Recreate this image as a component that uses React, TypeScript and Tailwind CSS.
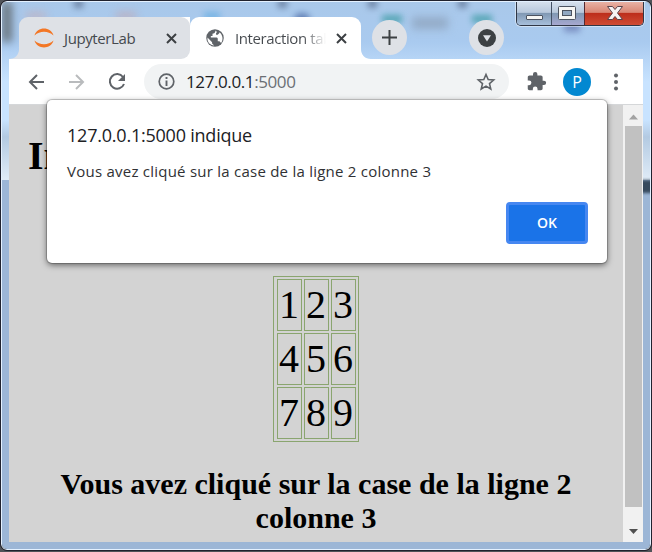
import React from "react";

const ui = "font-['Open_Sans','Noto_Sans',sans-serif]";

function CloseMark() {
  return (
    <svg width="11" height="11" viewBox="0 0 11 11" className="block shrink-0">
      <path d="M1 1 10 10M10 1 1 10" stroke="#3c4043" strokeWidth="2" fill="none" />
    </svg>
  );
}

function TabFoot({ flip, color }: { flip?: boolean; color: string }) {
  return (
    <svg width="10" height="10" viewBox="0 0 10 10" className={flip ? "block -scale-x-100" : "block"}>
      <path d="M10 0V10H0C6 10 10 6 10 0Z" fill={color} />
    </svg>
  );
}

function Tabs() {
  return (
    <div className="flex h-[42px]">
      <div className="flex w-[10px] shrink-0 items-end"><TabFoot color="#dee1e6" /></div>
      <div className="h-[42px] w-[171px] shrink-0 bg-[linear-gradient(90deg,transparent_50%,white_50%)]">
        <div className="flex h-[42px] items-center rounded-t-[9px] rounded-br-[9px] bg-[#dee1e6] pl-[14px] pr-[13px]">
          <svg width="22" height="22" viewBox="0 0 22 22" className="shrink-0">
            <path d="M1.500 8.500C4-.8 18-.8 20.500 8.500 15 3.500 7 3.500 1.500 8.500ZM1.500 13.500C7 18.500 15 18.500 20.500 13.500 18 22.800 4 22.800 1.500 13.500Z" fill="#f37726" />
          </svg>
          <span className="ml-[9px] flex-1 whitespace-nowrap text-[15px] leading-5 tracking-[-0.4px] text-[#45494e]">JupyterLab</span>
          <CloseMark />
        </div>
      </div>
      <div className="flex h-[42px] w-[171px] shrink-0 items-center rounded-t-[9px] bg-white pl-[15px] pr-[14px]">
        <svg width="20" height="20" viewBox="0 0 24 24" className="shrink-0">
          <circle cx="12" cy="12" r="10.500" fill="#5f6368" />
          <path d="M3 11.500 8.500 17v1.500l2.500 2.500C6 21 2.500 17 3 11.500ZM13 3c-1 1-.3 2-2 3.200L9 7v2.500H7v2h7c1 0 1.300 1 1.300 2V16h2l2 2c3-4 2-10-2-13v1l-2 2h-2V6l1-1Z" fill="white" />
        </svg>
        <div className="ml-[10px] flex-1 overflow-hidden whitespace-nowrap bg-[linear-gradient(90deg,#45494e_75%,transparent_100%)] bg-clip-text text-[15px] leading-5 tracking-[-0.4px] text-transparent">Interaction tab</div>
        <div className="ml-[10px]"><CloseMark /></div>
      </div>
      <div className="flex w-[10px] shrink-0 items-end"><TabFoot flip color="white" /></div>
      <div className="ml-[1px] mt-[3px] grid size-[35px] shrink-0 place-items-center rounded-full bg-[#dee1e6]">
        <svg width="15" height="15" viewBox="0 0 15 15"><path d="M7.500 0V15M0 7.500H15" stroke="#3c4043" strokeWidth="2" /></svg>
      </div>
      <div className="ml-[62px] mt-[3px] grid size-[35px] shrink-0 place-items-center rounded-full bg-[#dee1e6]">
        <svg width="18" height="18" viewBox="0 0 18 18"><circle cx="9" cy="9" r="9" fill="#3c4043" /><path d="M5 6.200h8L9 12.500Z" fill="#dee1e6" /></svg>
      </div>
    </div>
  );
}

function Toolbar() {
  return (
    <div className="flex h-[46px] items-center border-b border-[#d5d7d9] bg-white">
      <svg width="20" height="20" viewBox="0 0 20 20" className="ml-[18px] shrink-0">
        <path d="M17 10H3M10 3 3 10 10 17" fill="none" stroke="#5f6368" strokeWidth="2" />
      </svg>
      <svg width="20" height="20" viewBox="0 0 20 20" className="ml-[20px] shrink-0">
        <path d="M2 10H16M9 3 16 10 9 17" fill="none" stroke="#b9bbbd" strokeWidth="2" />
      </svg>
      <svg width="20" height="20" viewBox="0 0 20 20" className="ml-[20px] shrink-0">
        <path d="M16 5A7.300 7.300 0 1 0 17 12" fill="none" stroke="#5f6368" strokeWidth="2" />
        <path d="M18 2V9H11Z" fill="#5f6368" />
      </svg>
      <div className="ml-[17px] flex h-[35px] w-[365px] shrink-0 items-center rounded-full bg-[#f1f3f4] pl-[14px] pr-[13px]">
        <svg width="17" height="17" viewBox="0 0 17 17" className="shrink-0">
          <circle cx="8.500" cy="8.500" r="7.300" fill="none" stroke="#5f6368" strokeWidth="1.700" />
          <path d="M8.500 7.500V13M8.500 4V6" stroke="#5f6368" strokeWidth="1.900" />
        </svg>
        <span className="ml-[11px] flex-1 text-[17px] leading-6 tracking-[-0.4px] text-[#202124]">127.0.0.1<span className="text-[#6b6f74]">:5000</span></span>
        <svg width="20" height="20" viewBox="0 0 20 20" className="shrink-0">
          <path d="m10 2.500 2.200 5 5.500.5-4.200 3.600 1.300 5.400L10 14.100 5.200 17l1.300-5.400L2.300 8l5.500-.5Z" fill="none" stroke="#5f6368" strokeWidth="1.600" />
        </svg>
      </div>
      <svg width="21" height="21" viewBox="0 0 24 24" className="ml-[17px] shrink-0" fill="#5f6368">
        <path d="M20.500 11H19V7c0-1.100-.9-2-2-2h-4V3.500a2.500 2.500 0 0 0-5 0V5H4c-1.100 0-2 .9-2 2v3.800h1.500a2.700 2.700 0 0 1 0 5.400H2V20c0 1.100.9 2 2 2h3.800v-1.500a2.700 2.700 0 0 1 5.400 0V22H17c1.100 0 2-.9 2-2v-4h1.500a2.500 2.500 0 0 0 0-5Z" />
      </svg>
      <div className="ml-[16px] grid size-7 shrink-0 place-items-center rounded-full bg-[#0288d1] text-[16px] leading-5 text-white">P</div>
      <svg width="6" height="18" viewBox="0 0 6 18" className="ml-[22px] shrink-0" fill="#5f6368">
        <circle cx="3" cy="2.500" r="2" /><circle cx="3" cy="9" r="2" /><circle cx="3" cy="15.500" r="2" />
      </svg>
    </div>
  );
}

function WindowButtons() {
  return (
    <div className="absolute right-[6px] top-0 flex h-6 w-[128px] overflow-hidden rounded-b-[5px] border border-t-0 border-[#303746] shadow-[0_0_0_1px_rgba(255,255,255,0.45)]">
      <div className="w-[35px] border-r border-[#435064] bg-[linear-gradient(#d5e0ed_0%,#b8c8dc_45%,#8199b4_50%,#a7bfdb_100%)]">
        <svg width="34" height="24"><rect x="9.500" y="13.500" width="16" height="4" rx="0.500" fill="#f6f6f4" stroke="#4c5360" /></svg>
      </div>
      <div className="w-[33px] border-r border-[#532931] bg-[linear-gradient(#d5e0ed_0%,#b8c8dc_45%,#8199b4_50%,#a7a8d0_100%)]">
        <svg width="32" height="24"><rect x="6.500" y="4.500" width="17" height="13" rx="1" fill="#f6f6f4" stroke="#4c5360" /><rect x="10.500" y="8.500" width="9" height="5" fill="#91a8c2" stroke="#4c5360" /></svg>
      </div>
      <div className="flex-1 bg-[linear-gradient(#e8b2a5_0%,#d98674_45%,#bd2e1b_50%,#cf4c34_100%)]">
        <svg width="58" height="24"><path d="M22.500 4.500h5l2.500 3 2.500-3h5l-5 6.500 5 6.500h-5l-2.500-3-2.500 3h-5l5-6.500Z" fill="#f6f3f3" stroke="#59434b" /></svg>
      </div>
    </div>
  );
}

function Glass() {
  return (
    <div className="absolute inset-0 overflow-hidden bg-[#9cb6d6]">
      <div className="h-[178px] bg-[linear-gradient(#a9c8ea_0px,#a9caef_40px,#c8e3ff_80px,#c8e3ff_118px,#b3cae2_135px,#dfebf7_177px)]" />
      <div className="absolute left-0 top-0 h-10 w-[10px] bg-[#68747d] blur-[4px]" />
      <div className="absolute left-[24px] top-[10px] h-2 w-5 bg-[#c6aeb7] opacity-70 blur-[4px]" />
      <div className="absolute left-[114px] top-[10px] h-2 w-5 bg-[#c3a7b1] opacity-70 blur-[4px]" />
      <div className="absolute left-[202px] top-[10px] h-2 w-4 bg-[#58a8df] opacity-60 blur-[3px]" />
      <div className="absolute left-[292px] top-[11px] h-3 w-4 rounded-full bg-[#4966a1] opacity-70 blur-[3px]" />
      <div className="absolute left-[380px] top-[13px] h-2 w-5 bg-[#419da7] opacity-80 blur-[3px]" />
      <div className="absolute left-[410px] top-[15px] h-3 w-9 bg-[#93abc7] blur-[4px]" />
      <div className="absolute left-[470px] top-[13px] h-2 w-5 bg-[#419da7] opacity-80 blur-[3px]" />
      <div className="absolute left-[562px] top-[18px] h-3 w-4 bg-[#6777b0] opacity-70 blur-[3px]" />
      <div className="absolute left-[72px] top-[-3px] size-[9px] bg-[#55698a] opacity-70 blur-[3px]" />
      <div className="absolute left-[276px] top-[-3px] size-[9px] bg-[#55698a] opacity-70 blur-[3px]" />
      <div className="absolute left-[366px] top-[-3px] size-[9px] bg-[#55698a] opacity-70 blur-[3px]" />
      <div className="absolute left-[456px] top-[-3px] size-[9px] bg-[#55698a] opacity-70 blur-[3px]" />
      <div className="absolute right-[-3px] top-[178px] h-[13px] w-[14px] bg-[#374a5d] blur-[1.5px]" />
    </div>
  );
}

function PageBody() {
  return (
    <div className="flex h-[437px] bg-[#d3d3d3] font-['Liberation_Serif','Times_New_Roman',serif] text-black">
      <main className="w-[614px] shrink-0 overflow-hidden">
        <h1 className="h-[171px] pl-[19px] pt-[28px] text-[40px] font-bold leading-[46px]">Interaction table</h1>
        <div className="ml-[264px] grid h-[166px] w-[86px] grid-cols-[25px_25px_25px] grid-rows-[52px_52px_52px] gap-[2px] border border-[#8aa56f] py-[2px] pl-[3px]">
          {[1, 2, 3, 4, 5, 6, 7, 8, 9].map((n) => (
            <div key={n} className="flex items-center justify-start border border-[#8aa56f] pl-[1px] text-[40px] leading-[50px]">{n}</div>
          ))}
        </div>
        <h2 className="mt-[25px] px-[10px] text-center text-[30px] font-bold leading-[34px]">Vous avez cliqué sur la case de la ligne 2 <br />colonne 3</h2>
      </main>
      <div className="flex w-5 flex-col bg-[#f1f1f1]">
        <svg width="20" height="21"><path d="M6 14.500 10.500 9.500 15 14.500Z" fill="#a3a3a3" /></svg>
        <div className="ml-[2px] h-[381px] w-[17px] bg-[#c1c1c1]" />
        <svg width="20" height="35"><path d="M6 22h9L10.500 27Z" fill="#505050" /></svg>
      </div>
    </div>
  );
}

function AlertDialog() {
  return (
    <div className="absolute left-[45px] top-[98px] h-[163px] w-[560px] rounded-[5px] bg-white px-[20px] pt-[23px] shadow-[0_0_0_1px_rgba(0,0,0,0.18),0_2px_6px_rgba(0,0,0,0.55)]">
      <div className="whitespace-nowrap text-[18px] leading-6 tracking-[-0.22px] text-[#202124]">127.0.0.1:5000 indique</div>
      <div className="mt-[14px] whitespace-nowrap text-[15px] leading-5 tracking-[0.24px] text-[#303134]">Vous avez cliqué sur la case de la ligne 2 colonne 3</div>
      <div className="mt-[21px] flex justify-end">
        <button className="-mr-[1px] h-[42px] w-[82px] rounded-[4px] border-[3px] border-[#4687f1] bg-[#1a73e8] text-[14px] font-semibold leading-5 text-white">OK</button>
      </div>
    </div>
  );
}

export default function App() {
  return (
    <div className={`h-[552px] w-[652px] overflow-hidden bg-[#505358] ${ui}`}>
      <div className="h-[551px] w-[652px] overflow-hidden rounded-[7px] border border-[#20222e]">
        <div className="relative h-[549px] w-[650px] overflow-hidden rounded-[6px] border border-[#e4f1ff]">
          <Glass />
          <div className="relative w-[641px] pl-[7px] pt-[15px]">
            <Tabs />
            <Toolbar />
            <PageBody />
          </div>
          <AlertDialog />
          <WindowButtons />
        </div>
      </div>
    </div>
  );
}
